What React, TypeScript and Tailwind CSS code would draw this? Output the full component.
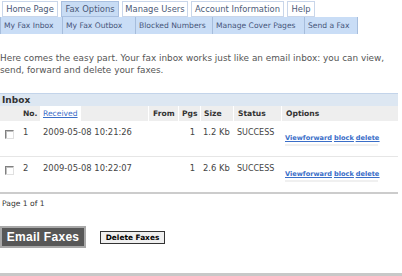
import React from "react";

const mainTabs = [
  { label: "Home Page", w: "w-[56px]", active: false },
  { label: "Fax Options", w: "w-[58px]", active: true },
  { label: "Manage Users", w: "w-[66px]", active: false },
  { label: "Account Information", w: "w-[93px]", active: false },
  { label: "Help", w: "w-[28px]", active: false },
];

const subTabs = [
  { label: "My Fax Inbox", w: "w-[63px]" },
  { label: "My Fax Outbox", w: "w-[73px]" },
  { label: "Blocked Numbers", w: "w-[77px]" },
  { label: "Manage Cover Pages", w: "w-[92px]" },
  { label: "Send a Fax", w: "w-[53px]" },
];

const faxes = [
  { no: 1, received: "2009-05-08 10:21:26", pgs: 1, size: "1.2 Kb", status: "SUCCESS" },
  { no: 2, received: "2009-05-08 10:22:07", pgs: 1, size: "2.6 Kb", status: "SUCCESS" },
];

const cols = "grid grid-cols-[20px_20px_108px_30px_22px_33px_48px_117px]";

function Checkbox() {
  return (
    <span className="block h-[9px] w-[9px] border-t border-l border-t-[#808080] border-l-[#808080] border-b border-r border-b-[#e0e0e0] border-r-[#e0e0e0] bg-white shadow-[inset_1px_1px_0_#c0c0c0]" />
  );
}

function Tabs() {
  return (
    <div>
      <div className="flex h-[17px] items-end gap-[3px] pl-[2px]">
        {mainTabs.map((t) => (
          <div
            key={t.label}
            className={`${t.w} flex h-[16px] items-center justify-center border text-[8.4px] text-[#4c5a78] ${
              t.active ? "border-[#a9c0e0] bg-[#c8dcf4]" : "border-[#c9d6ea] bg-white"
            }`}
          >
            {t.label}
          </div>
        ))}
      </div>
      <div className="flex h-[17px] w-[358px] bg-[#c9ddf6]">
        {subTabs.map((t, i) => (
          <div
            key={t.label}
            className={`${t.w} flex items-center whitespace-nowrap border-r border-[#a6bddc] pl-[3px] text-[7.6px] text-[#46557a] ${
              i === 0 ? "border-l" : ""
            }`}
          >
            {t.label}
          </div>
        ))}
      </div>
    </div>
  );
}

function Links() {
  return (
    <div className="mt-[12px] ml-[4px] flex w-[93px] gap-[2px] border-b-2 border-[#f0f0f0] pb-[1px] text-[6.6px] font-bold leading-[10px] text-[#3a6ec8] underline">
      <a>Viewforward</a>
      <a>block</a>
      <a>delete</a>
    </div>
  );
}

function InboxTable() {
  return (
    <div className="w-[398px]">
      <div className="h-[13px] border-t border-[#c3d4ea] bg-[#dde7f2] pl-[2px] text-[9px] font-bold leading-[12px] text-[#333]">
        Inbox
      </div>
      <div className={`${cols} h-[15px] items-stretch bg-[#eeeeee] text-[7.6px] font-bold leading-[15px] text-[#333]`}>
        <div />
        <div className="pl-[3px]">No.</div>
        <div>
          <a className="inline-block bg-white px-[3px] font-normal text-[#3a6ec8] underline">Received</a>
        </div>
        <div className="border-l border-white pl-[4px]">From</div>
        <div className="border-l border-white pl-[3px]">Pgs</div>
        <div className="border-l border-white pl-[3px]">Size</div>
        <div className="border-l border-white pl-[4px]">Status</div>
        <div className="border-l border-white pl-[4px]">Options</div>
      </div>
      {faxes.map((f, i) => (
        <div
          key={f.no}
          className={`${cols} text-[8.4px] leading-[11px] text-[#444] ${
            i === 0 ? "h-[36px] border-b border-[#e6e6e6]" : "h-[35px]"
          }`}
        >
          <div className="pt-[9px] pl-[5px]">
            <Checkbox />
          </div>
          <div className="pt-[6px] pl-[3px]">{f.no}</div>
          <div className="pt-[6px] pl-[3px]">{f.received}</div>
          <div />
          <div className="pt-[6px] pr-[5px] text-right">{f.pgs}</div>
          <div className="pt-[6px] pl-[3px]">{f.size}</div>
          <div className="pt-[6px] pl-[4px] text-[8px]">{f.status}</div>
          <div>
            <Links />
          </div>
        </div>
      ))}
      <div className="h-[2px] bg-[#cccccc]" />
    </div>
  );
}

export default function App() {
  return (
    <div className="relative h-[276px] w-[402px] overflow-hidden bg-white font-['DejaVu_Sans',Verdana,sans-serif]">
      <Tabs />
      <p className="mt-[18px] w-[398px] text-[8.9px] leading-[12px] text-[#555]">
        Here comes the easy part. Your fax inbox works just like an email inbox: you can view, send, forward and
        delete your faxes.
      </p>
      <div className="mt-[17px]">
        <InboxTable />
      </div>
      <div className="mt-[5px] pl-[2px] text-[7.6px] leading-[10px] text-[#333]">Page 1 of 1</div>
      <div className="mt-[17px] flex items-center gap-[14px]">
        <button className="h-[22px] w-[86px] border-2 border-[#a8a8a8] bg-[#575757] font-['Liberation_Sans',Arial,sans-serif] text-[12px] font-bold tracking-[0.3px] text-white">
          Email Faxes
        </button>
        <button className="h-[13px] w-[65px] border border-[#333] bg-[#efefef] text-[7.4px] font-bold leading-[11px] text-black">
          Delete Faxes
        </button>
      </div>
      <div className="absolute bottom-0 left-0 h-[3px] w-full bg-[#c8c8c8]" />
    </div>
  );
}
